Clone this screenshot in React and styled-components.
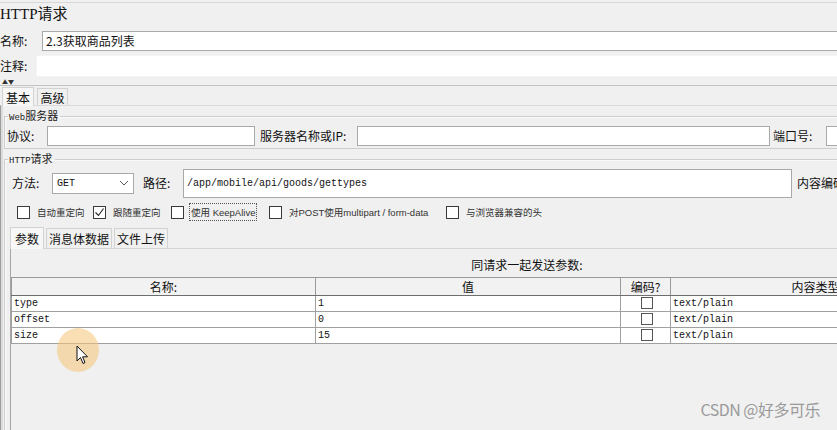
import styled, { createGlobalStyle } from "styled-components";

const cjk = `"Noto Sans CJK SC", "Liberation Sans", sans-serif`;
const mono = `"Liberation Mono", "DejaVu Sans Mono", monospace`;

const GlobalStyle = createGlobalStyle`
  html, body {
    margin: 0;
    padding: 0;
    background: #f0f0f0;
    overflow: hidden;
  }
  * { box-sizing: border-box; }
`;

const Screen = styled.div`
  position: relative;
  width: 837px;
  height: 430px;
  overflow: hidden;
`;

const Page = styled.div`
  width: 1060px;
  height: 430px;
  display: flex;
  flex-direction: column;
  font-family: ${cjk};
  font-size: 12px;
  color: #111;
  border-top: 1px solid #d8d8d8;
  margin-top: 2px;
`;

const Title = styled.div`
  height: 25px;
  padding-top: 2px;
  font-family: "Liberation Serif", "Noto Sans CJK SC", serif;
  font-size: 15px;
  line-height: 18px;
`;

const FieldRow = styled.div`
  display: flex;
  align-items: center;
  height: ${(p) => p.$h || 24}px;
  padding-left: ${(p) => p.$pl || 0}px;
  flex-shrink: 0;
`;

const Label = styled.span`
  width: ${(p) => p.$w}px;
  margin-left: ${(p) => p.$ml || 0}px;
  flex-shrink: 0;
  white-space: nowrap;
  font-size: 12px;
  line-height: 16px;
`;

const Input = styled.div`
  width: ${(p) => (p.$w ? `${p.$w}px` : "auto")};
  flex: ${(p) => (p.$w ? "0 0 auto" : "1")};
  height: ${(p) => p.$h || 20}px;
  background: #fff;
  border: 1px solid ${(p) => (p.$plain ? "#f4f4f4" : "#a9a9a9")};
  display: flex;
  align-items: center;
  padding-left: 3px;
  font-family: ${(p) => (p.$mono ? mono : cjk)};
  font-size: ${(p) => (p.$mono ? 10 : 12)}px;
  white-space: nowrap;
`;

const Splitter = styled.div`
  height: 7px;
  padding-left: 2px;
  font-size: 6px;
  line-height: 6px;
  color: #333;
  border-bottom: 1px solid #c4c4c4;
  flex-shrink: 0;
`;

const TabBar = styled.div`
  display: flex;
  align-items: flex-end;
  height: ${(p) => p.$h}px;
  padding-left: ${(p) => p.$pl}px;
  gap: ${(p) => p.$gap || 2}px;
  flex-shrink: 0;
`;

const Tab = styled.div`
  width: ${(p) => p.$w}px;
  height: ${(p) => (p.$active ? p.$h + 2 : p.$h)}px;
  display: flex;
  align-items: center;
  justify-content: center;
  font-size: 12px;
  background: ${(p) => (p.$active ? "#f7f7f7" : "#f0f0f0")};
  border: 1px solid #d2d2d2;
  border-bottom: none;
  margin-bottom: ${(p) => (p.$active ? -1 : 0)}px;
  position: relative;
  z-index: ${(p) => (p.$active ? 1 : 0)};
`;

const TabPanel = styled.div`
  flex: 1;
  min-height: 0;
  border-left: 1px solid #9c9c9c;
  border-top: 1px solid #dadada;
  padding-left: 3px;
  display: flex;
  flex-direction: column;
  box-shadow: inset 2px 0 0 #dcdcdc;
`;

const Group = styled.fieldset`
  margin: ${(p) => p.$mt}px 0 0 0;
  padding: 0 0 ${(p) => p.$pb || 0}px 0;
  border: 1px solid #cdcdcd;
  border-right: none;
  box-shadow: inset 1px 1px 0 #fafafa;
  min-width: 0;
  flex-shrink: 0;
  ${(p) => p.$grow && "flex: 1; border-bottom: none;"}
`;

const Legend = styled.legend`
  padding: 0 2px 0 1px;
  margin-left: 3px;
  font-size: 11px;
  line-height: 14px;
  color: #222;

  b {
    font-family: ${mono};
    font-weight: normal;
    font-size: 9px;
  }
`;

const Select = styled.div`
  width: 82px;
  height: 21px;
  flex-shrink: 0;
  background: #fff;
  border: 1px solid #a9a9a9;
  display: flex;
  align-items: center;
  justify-content: space-between;
  padding: 0 4px 0 4px;
  font-family: ${mono};
  font-size: 10px;
`;

const CheckRow = styled.div`
  display: flex;
  align-items: center;
  height: 26px;
  padding-left: 12px;
  margin-top: 1px;
`;

const CheckItem = styled.div`
  width: ${(p) => (p.$w ? `${p.$w}px` : "auto")};
  flex-shrink: 0;
  display: flex;
  align-items: center;
  gap: 5px;
  font-size: 9.5px;
  color: #333;
  white-space: nowrap;
`;

const Box = styled.span`
  width: 13px;
  height: 13px;
  flex-shrink: 0;
  border: 1px solid #3a3a3a;
  background: #fff;
  display: flex;
  align-items: center;
  justify-content: center;
`;

const CheckText = styled.span`
  font-family: "Liberation Sans", "Noto Sans CJK SC", sans-serif;
  padding: 1px 1px;
  border: 1px dotted ${(p) => (p.$focus ? "#555" : "transparent")};
`;

const SubPanel = styled.div`
  margin-left: 5px;
  border-left: 1px solid #a6a6a6;
  border-top: 1px solid #d4d4d4;
  height: 200px;
  padding-top: 8px;
`;

const ParamsTitle = styled.div`
  width: 1032px;
  text-align: center;
  height: 16px;
  line-height: 16px;
  font-size: 12px;
`;

const Table = styled.table`
  margin-top: 4px;
  border-collapse: collapse;
  table-layout: fixed;
  width: 949px;
  border: 1px solid #8a8a8a;
`;

const HeadCell = styled.th`
  height: 18px;
  padding: 0;
  font-weight: normal;
  font-size: 12px;
  background: #f2f2f2;
  border: 1px solid #9a9a9a;
  border-bottom: 1px solid #6e6e6e;
  text-align: center;
`;

const Cell = styled.td`
  height: 16px;
  padding: 0 0 0 2px;
  background: #fff;
  border: 1px solid #a0a0a0;
  font-family: ${mono};
  font-size: 10px;
  line-height: 14px;
  text-align: ${(p) => (p.$center ? "center" : "left")};
  vertical-align: middle;
`;

const SmallBox = styled.span`
  display: inline-block;
  width: 12px;
  height: 12px;
  border: 1px solid #555;
  background: #fff;
  vertical-align: middle;
`;

const Watermark = styled.div`
  position: absolute;
  right: 17px;
  bottom: 9px;
  font-family: "Noto Sans CJK SC", "Liberation Sans", sans-serif;
  font-size: 16px;
  color: #9a9a9a;
  letter-spacing: -0.5px;
`;

const Highlight = styled.div`
  position: absolute;
  left: 57px;
  top: 328px;
  width: 42px;
  height: 44px;
  border-radius: 50%;
  background: rgba(246, 196, 120, 0.55);
`;

const Pointer = styled.svg`
  position: absolute;
  left: 76px;
  top: 345px;
`;

const checks = [
  { text: "自动重定向", w: 76 },
  { text: "跟随重定向", w: 78, checked: true },
  { text: "使用 KeepAlive", w: 98, focus: true },
  { text: "对POST使用multipart / form-data", w: 177 },
  { text: "与浏览器兼容的头" },
];

const params = [
  { name: "type", value: "1" },
  { name: "offset", value: "0" },
  { name: "size", value: "15" },
];

const App = () => {
  return (
    <Screen>
      <GlobalStyle />
      <Page>
        <Title>HTTP请求</Title>
        <FieldRow $h={25}>
          <Label $w={42}>名称:</Label>
          <Input>2.3获取商品列表</Input>
        </FieldRow>
        <FieldRow $h={26}>
          <Label $w={36}>注释:</Label>
          <Input $h={22} $plain />
        </FieldRow>
        <Splitter>▲▼</Splitter>

        <TabBar $h={19} $pl={2} $gap={3}>
          <Tab $w={32} $h={17} $active>基本</Tab>
          <Tab $w={31} $h={17}>高级</Tab>
        </TabBar>

        <TabPanel>
          <Group $mt={2} $pb={2}>
            <Legend><b>Web</b>服务器</Legend>
            <FieldRow $h={21} $pl={2}>
              <Label $w={40}>协议:</Label>
              <Input $w={208} />
              <Label $w={97} $ml={5}>服务器名称或IP:</Label>
              <Input $w={413} />
              <Label $w={53} $ml={3}>端口号:</Label>
              <Input $w={200} />
            </FieldRow>
          </Group>

          <Group $mt={2} $grow>
            <Legend><b>HTTP</b>请求</Legend>
            <FieldRow $h={30} $pl={7}>
              <Label $w={40}>方法:</Label>
              <Select>
                GET
                <svg width="10" height="6" viewBox="0 0 10 6">
                  <path d="M1 1 L5 5 L9 1" fill="none" stroke="#555" strokeWidth="1" />
                </svg>
              </Select>
              <Label $w={40} $ml={9}>路径:</Label>
              <Input $w={609} $h={29} $mono>/app/mobile/api/goods/gettypes</Input>
              <Label $w={80} $ml={5}>内容编码:</Label>
            </FieldRow>

            <CheckRow>
              {checks.map((c) => (
                <CheckItem key={c.text} $w={c.w}>
                  <Box>
                    {c.checked && (
                      <svg width="11" height="11" viewBox="0 0 11 11">
                        <path d="M1.5 5.5 L4.5 8.5 L9.5 1.5" fill="none" stroke="#222" strokeWidth="1.1" />
                      </svg>
                    )}
                  </Box>
                  <CheckText $focus={c.focus}>{c.text}</CheckText>
                </CheckItem>
              ))}
            </CheckRow>

            <TabBar $h={23} $pl={5} $gap={2}>
              <Tab $w={34} $h={20} $active>参数</Tab>
              <Tab $w={66} $h={20}>消息体数据</Tab>
              <Tab $w={54} $h={20}>文件上传</Tab>
            </TabBar>

            <SubPanel>
              <ParamsTitle>同请求一起发送参数:</ParamsTitle>
              <Table>
                <colgroup>
                  <col style={{ width: 304 }} />
                  <col style={{ width: 305 }} />
                  <col style={{ width: 50 }} />
                  <col style={{ width: 290 }} />
                </colgroup>
                <thead>
                  <tr>
                    <HeadCell>名称:</HeadCell>
                    <HeadCell>值</HeadCell>
                    <HeadCell>编码?</HeadCell>
                    <HeadCell>内容类型</HeadCell>
                  </tr>
                </thead>
                <tbody>
                  {params.map((p) => (
                    <tr key={p.name}>
                      <Cell>{p.name}</Cell>
                      <Cell>{p.value}</Cell>
                      <Cell $center><SmallBox /></Cell>
                      <Cell>text/plain</Cell>
                    </tr>
                  ))}
                </tbody>
              </Table>
            </SubPanel>
          </Group>
        </TabPanel>
      </Page>

      <Highlight />
      <Pointer width="13" height="21" viewBox="0 0 13 21">
        <path d="M1 1 L1 16 L4.5 12.5 L7 18.5 L9 17.6 L6.6 11.8 L11.5 11.8 Z" fill="#fff" stroke="#111" strokeWidth="1" />
      </Pointer>
      <Watermark>CSDN @好多可乐</Watermark>
    </Screen>
  );
};

export default App;
